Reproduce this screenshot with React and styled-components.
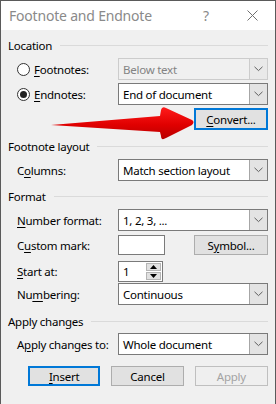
import React from "react";
import styled, { createGlobalStyle, css } from "styled-components";

const Global = createGlobalStyle`
  html, body { margin: 0; padding: 0; background: #f0f0f0; }
  body { font-family: "Noto Sans", "Open Sans", sans-serif; }
  * { box-sizing: border-box; }
`;

const Window = styled.div`
  position: relative;
  width: 276px;
  height: 404px;
  border: 1px solid #5a5a5a;
  border-bottom: none;
  background: #f0f0f0;
  font-family: "Noto Sans", sans-serif;
  font-size: 11.5px;
  letter-spacing: -0.25px;
  color: #000;
  overflow: hidden;
`;

const TitleBar = styled.div`
  height: 29px;
  background: #fff;
  display: flex;
  align-items: center;
  padding-left: 8px;
`;

const Title = styled.div`
  flex: 1;
  font-size: 14px;
  color: #8a8a8a;
  letter-spacing: -0.2px;
`;

const TitleButton = styled.div`
  width: 46px;
  height: 29px;
  display: flex;
  align-items: center;
  justify-content: center;
  color: #8a8a8a;
  font-size: 14px;
`;

const Body = styled.div`
  padding: 0 7px;
  display: flex;
  flex-direction: column;
`;

const SectionHeader = styled.div`
  display: flex;
  align-items: center;
  gap: 8px;
  height: 16px;
  margin-top: ${(p) => p.$mt}px;
  &::after {
    content: "";
    flex: 1;
    height: 1px;
    background: #dadada;
  }
`;

const Row = styled.div`
  display: flex;
  align-items: center;
  height: ${(p) => p.$h || 22}px;
  margin-top: ${(p) => p.$mt}px;
  padding-left: 9px;
`;

const Label = styled.div`
  width: 101px;
  flex: none;
  white-space: nowrap;
`;

const U = styled.span`
  text-decoration: underline;
  text-underline-offset: 2px;
`;

const RadioLabel = styled.label`
  width: 101px;
  flex: none;
  display: flex;
  align-items: center;
  gap: 4px;
`;

const RadioCircle = styled.span`
  width: 13px;
  height: 13px;
  border-radius: 50%;
  border: 1px solid #333;
  background: #fff;
  display: flex;
  align-items: center;
  justify-content: center;
  &::after {
    content: "";
    width: 7px;
    height: 7px;
    border-radius: 50%;
    background: ${(p) => (p.$checked ? "#222" : "transparent")};
  }
`;

const Select = styled.div`
  flex: 1;
  height: 100%;
  display: flex;
  border: 1px solid ${(p) => (p.$disabled ? "#cccccc" : "#7a7a7a")};
  background: ${(p) => (p.$disabled ? "#f0f0f0" : "#fff")};
  color: ${(p) => (p.$disabled ? "#838383" : "#000")};
`;

const SelectText = styled.div`
  flex: 1;
  display: flex;
  align-items: center;
  padding-left: 4px;
`;

const SelectArrow = styled.div`
  width: 18px;
  display: flex;
  align-items: center;
  justify-content: center;
  background: ${(p) => (p.$disabled ? "#e9e9e9" : "#e3e3e3")};
  border-left: 1px solid ${(p) => (p.$disabled ? "#cccccc" : "#a6a6a6")};
`;

const Button = styled.div`
  width: ${(p) => p.$w || 74}px;
  height: ${(p) => p.$h || 21}px;
  display: flex;
  align-items: center;
  justify-content: center;
  background: #e1e1e1;
  border: 1px solid #adadad;
  color: #000;
  ${(p) =>
    p.$default &&
    css`
      border: 2px solid #0078d7;
    `}
  ${(p) =>
    p.$disabled &&
    css`
      background: #efefef;
      border-color: #bfbfbf;
      color: #a3a3a3;
    `}
`;

const TextBox = styled.div`
  width: ${(p) => p.$w}px;
  height: ${(p) => p.$h || 20}px;
  border: 1px solid #7a7a7a;
  background: #fff;
  display: flex;
  align-items: center;
`;

const SpinText = styled.div`
  flex: 1;
  padding-left: 4px;
`;

const SpinButtons = styled.div`
  width: 16px;
  height: 100%;
  display: flex;
  flex-direction: column;
  gap: 1px;
  padding: 1px 1px 1px 0;
`;

const SpinBtn = styled.div`
  flex: 1;
  background: #e1e1e1;
  border: 1px solid #b5b5b5;
  display: flex;
  align-items: center;
  justify-content: center;
`;

const Spacer = styled.div`
  flex: 1;
`;

const ButtonRow = styled.div`
  display: flex;
  align-items: center;
  margin-top: 11px;
  padding-left: 20px;
  gap: 11px;
`;

const ArrowOverlay = styled.svg`
  position: absolute;
  left: 0;
  top: 0;
  pointer-events: none;
`;

const Chevron = () => (
  <svg width="9" height="6" viewBox="0 0 9 6">
    <polyline points="0.5,0.8 4.5,4.6 8.5,0.8" fill="none" stroke="#5f5f5f" strokeWidth="1" />
  </svg>
);

function Dropdown({ value, disabled }) {
  return (
    <Select $disabled={disabled}>
      <SelectText>{value}</SelectText>
      <SelectArrow $disabled={disabled}>
        <Chevron />
      </SelectArrow>
    </Select>
  );
}

export default function App() {
  return (
    <>
      <Global />
      <Window>
        <TitleBar>
          <Title>Footnote and Endnote</Title>
          <TitleButton>?</TitleButton>
          <TitleButton>
            <svg width="11" height="11" viewBox="0 0 11 11">
              <path d="M0.5 0.5 L10.5 10.5 M10.5 0.5 L0.5 10.5" stroke="#707070" strokeWidth="1" />
            </svg>
          </TitleButton>
        </TitleBar>
        <Body>
          <SectionHeader $mt={7}>Location</SectionHeader>
          <Row $mt={5}>
            <RadioLabel>
              <RadioCircle />
              <span>
                <U>F</U>ootnotes:
              </span>
            </RadioLabel>
            <Dropdown value="Below text" disabled />
          </Row>
          <Row $mt={3}>
            <RadioLabel>
              <RadioCircle $checked />
              <span>
                <U>E</U>ndnotes:
              </span>
            </RadioLabel>
            <Dropdown value="End of document" />
          </Row>
          <Row $mt={3} $h={22}>
            <Spacer />
            <Button $default $h={22}>
              <span>
                <U>C</U>onvert...
              </span>
            </Button>
          </Row>
          <SectionHeader $mt={8}>Footnote layout</SectionHeader>
          <Row $mt={5}>
            <Label>
              C<U>o</U>lumns:
            </Label>
            <Dropdown value="Match section layout" />
          </Row>
          <SectionHeader $mt={7}>Format</SectionHeader>
          <Row $mt={5}>
            <Label>
              <U>N</U>umber format:
            </Label>
            <Dropdown value="1, 2, 3, ..." />
          </Row>
          <Row $mt={4} $h={20}>
            <Label>
              C<U>u</U>stom mark:
            </Label>
            <TextBox $w={47} />
            <Spacer />
            <Button $h={20}>
              <span>
                S<U>y</U>mbol...
              </span>
            </Button>
          </Row>
          <Row $mt={6} $h={21}>
            <Label>
              <U>S</U>tart at:
            </Label>
            <TextBox $w={45} $h={21}>
              <SpinText>1</SpinText>
              <SpinButtons>
                <SpinBtn>
                  <svg width="7" height="4" viewBox="0 0 7 4">
                    <polygon points="0,4 7,4 3.5,0" fill="#000" />
                  </svg>
                </SpinBtn>
                <SpinBtn>
                  <svg width="7" height="4" viewBox="0 0 7 4">
                    <polygon points="0,0 7,0 3.5,4" fill="#000" />
                  </svg>
                </SpinBtn>
              </SpinButtons>
            </TextBox>
          </Row>
          <Row $mt={1}>
            <Label>
              Nu<U>m</U>bering:
            </Label>
            <Dropdown value="Continuous" />
          </Row>
          <SectionHeader $mt={8}>Apply changes</SectionHeader>
          <Row $mt={4}>
            <Label>
              A<U>p</U>ply changes to:
            </Label>
            <Dropdown value="Whole document" />
          </Row>
          <ButtonRow>
            <Button $default $w={73} $h={20}>
              <span>
                <U>I</U>nsert
              </span>
            </Button>
            <Button $w={73} $h={20}>
              Cancel
            </Button>
            <Button $disabled $w={74} $h={20}>
              Apply
            </Button>
          </ButtonRow>
        </Body>
        <ArrowOverlay width="276" height="404" viewBox="0 0 276 404">
          <defs>
            <linearGradient id="arrowGrad" x1="0" y1="0" x2="0" y2="1">
              <stop offset="0" stopColor="#ff1a1a" />
              <stop offset="0.55" stopColor="#e00000" />
              <stop offset="1" stopColor="#b80000" />
            </linearGradient>
          </defs>
          <path
            d="M50 124 L159 115 L160 109 Q161 105 165 107 L191 119 Q194 121 191 124 L165 137 Q160 140 160 135 L159 131 Z"
            fill="url(#arrowGrad)"
          />
        </ArrowOverlay>
      </Window>
    </>
  );
}
